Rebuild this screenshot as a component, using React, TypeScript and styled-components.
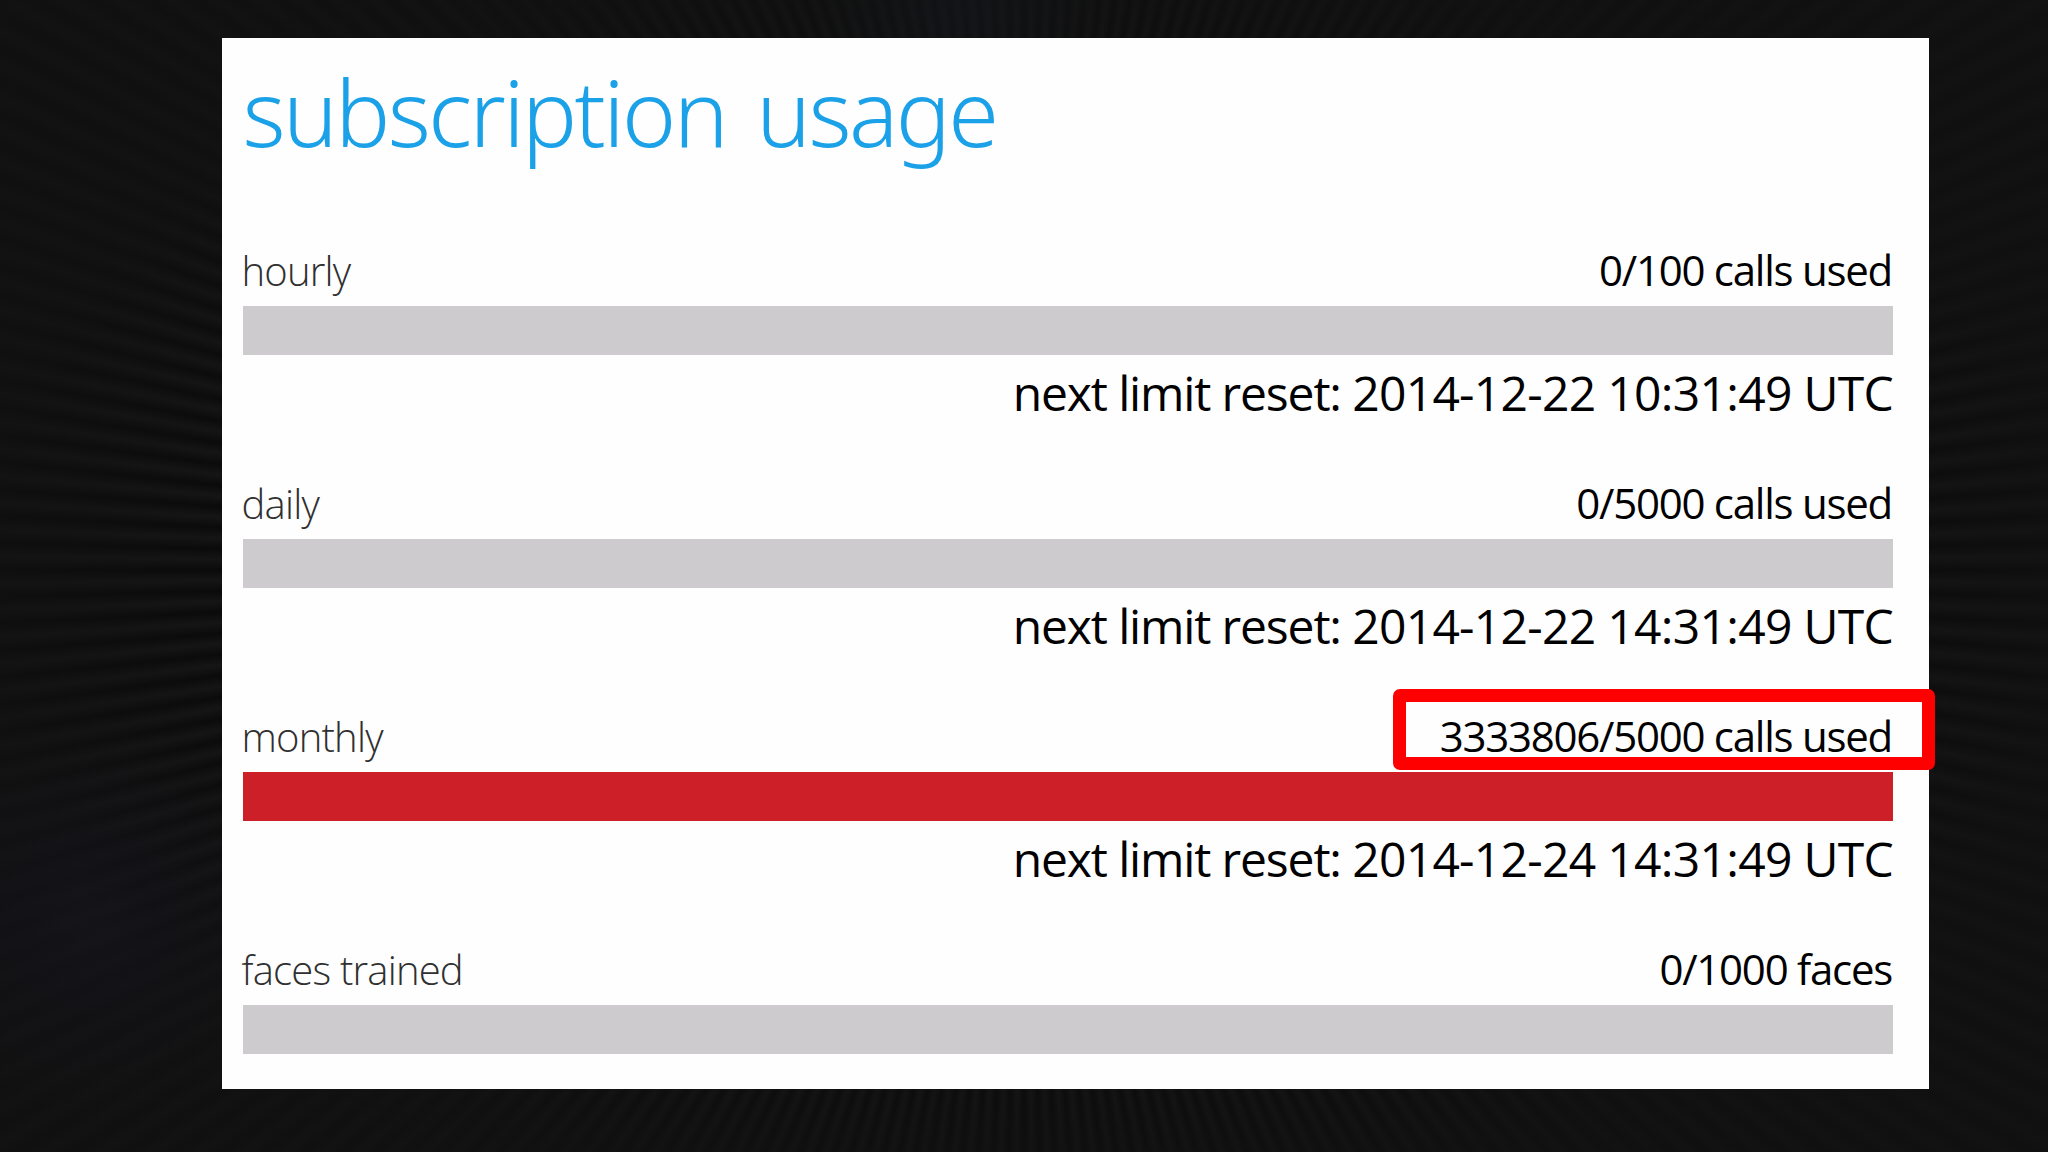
import React from 'react';
import styled, { createGlobalStyle } from 'styled-components';

interface Usage {
  label: string;
  value: string;
  reset?: string;
  exceeded?: boolean;
}

const USAGES: Usage[] = [
  { label: 'hourly', value: '0/100 calls used', reset: '2014-12-22 10:31:49 UTC' },
  { label: 'daily', value: '0/5000 calls used', reset: '2014-12-22 14:31:49 UTC' },
  {
    label: 'monthly',
    value: '3333806/5000 calls used',
    reset: '2014-12-24 14:31:49 UTC',
    exceeded: true,
  },
  { label: 'faces trained', value: '0/1000 faces' },
];

const App: React.FC = () => {
  return (
    <Slide>
      <GlobalStyle />
      <Panel>
        <Title>subscription usage</Title>
        {USAGES.map((usage) => (
          <Section key={usage.label}>
            <Header>
              <Label>{usage.label}</Label>
              <Value>{usage.value}</Value>
              {usage.exceeded && <Highlight />}
            </Header>
            <Bar $exceeded={usage.exceeded} />
            {usage.reset && (
              <Reset>
                next limit reset: <ResetTime>{usage.reset}</ResetTime>
              </Reset>
            )}
          </Section>
        ))}
      </Panel>
    </Slide>
  );
};

export default App;

const GlobalStyle = createGlobalStyle`
  body {
    margin: 0;
    background: #101010;
    overflow: hidden;
  }
`;

const Slide = styled.main`
  box-sizing: border-box;
  width: 2048px;
  height: 1152px;
  padding: 38px 0 0 222px;
  overflow: hidden;
  background:
    radial-gradient(circle at 90px 920px, rgba(24, 24, 40, 0.35), transparent 200px),
    radial-gradient(circle at 960px 20px, rgba(22, 26, 34, 0.35), transparent 160px),
    radial-gradient(ellipse at 50% 50%, rgba(0, 0, 0, 0.1) 50%, rgba(17, 17, 17, 0.85) 76%),
    repeating-conic-gradient(
      from 0deg at 1024px 570px,
      #0a0a0a 0deg,
      #191919 0.75deg,
      #0a0a0a 1.5deg
    );
  font-family: 'Open Sans', 'Noto Sans', sans-serif;
  color: #000000;
  white-space: nowrap;
`;

const Panel = styled.section`
  box-sizing: border-box;
  width: 1706.5px;
  height: 1050.5px;
  padding: 0 35.5px 0 20.5px;
  background: #fefefe;
`;

const Title = styled.h1`
  margin: 0;
  height: 202px;
  font-family: 'Noto Sans', 'Open Sans', sans-serif;
  font-size: 92px;
  font-weight: 300;
  line-height: 147px;
  letter-spacing: -2.6px;
  word-spacing: 9px;
  color: #1ba1e8;
`;

const Section = styled.div`
  height: 233px;
`;

const Header = styled.div`
  position: relative;
  display: flex;
  height: 66px;
  align-items: baseline;
  justify-content: space-between;
`;

const Label = styled.span`
  margin-left: -1px;
  font-size: 40px;
  font-weight: 300;
  line-height: 60px;
  letter-spacing: -0.8px;
  color: #303030;
`;

const Value = styled.span`
  margin-right: 1px;
  font-size: 42px;
  line-height: 60px;
  letter-spacing: -1.25px;
`;

// red marker frame laid over the exceeded value
const Highlight = styled.div`
  position: absolute;
  top: -17px;
  right: -42px;
  box-sizing: border-box;
  width: 542px;
  height: 81px;
  border: 13px solid #fe0000;
  border-radius: 7px;
`;

const Bar = styled.div<{ $exceeded?: boolean }>`
  height: 49px;
  background: ${({ $exceeded }) => ($exceeded ? '#cc1f27' : '#cdcbcd')};
`;

const Reset = styled.div`
  font-size: 48px;
  line-height: 76px;
  letter-spacing: -1.15px;
  text-align: right;
`;

const ResetTime = styled.span`
  letter-spacing: -0.7px;
`;
